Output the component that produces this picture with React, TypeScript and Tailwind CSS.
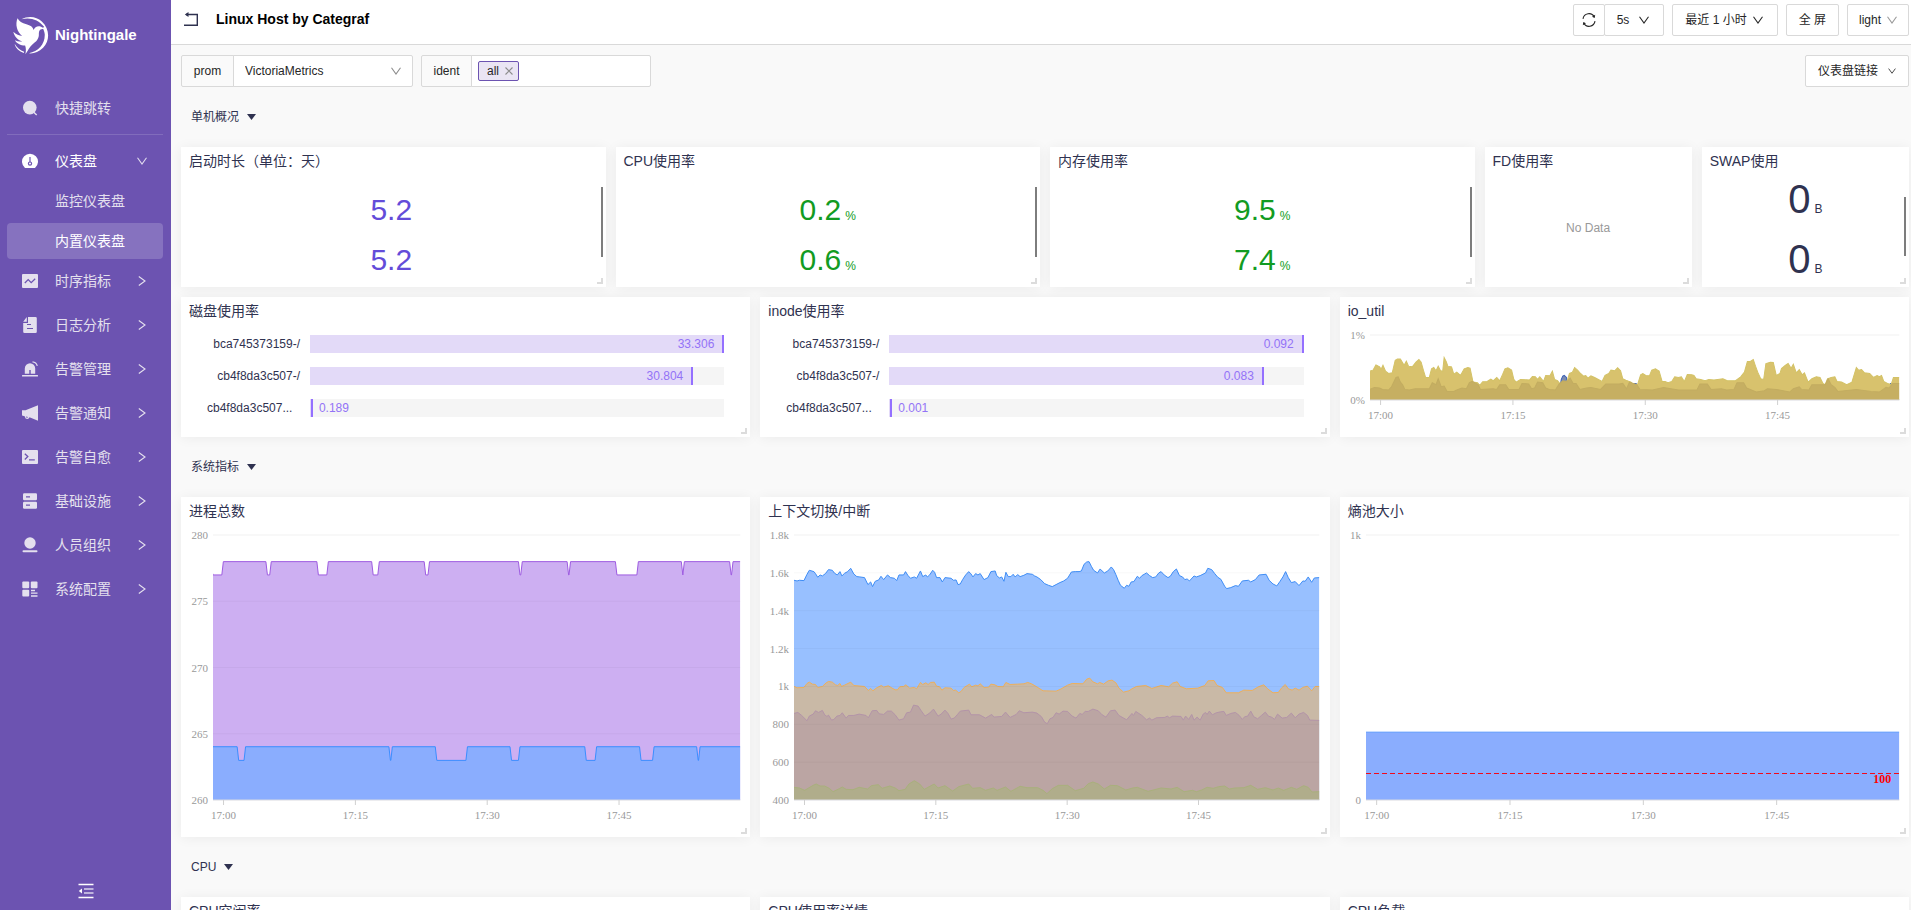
import React, { ReactNode, useState } from "react";
import clsx from "clsx";

type Series = {
  points: string;
  width: number;
  height: number;
  fill: string;
  stroke: string;
}

type Tick = {
  label: string;
  pos: number;
}

const timeTicks: Tick[] = [
  { label: '17:00', pos: 2 },
  { label: '17:15', pos: 27 },
  { label: '17:30', pos: 52 },
  { label: '17:45', pos: 77 },
];

const menus = [
  { name: '时序指标', icon: 'metric' },
  { name: '日志分析', icon: 'log' },
  { name: '告警管理', icon: 'alarm' },
  { name: '告警通知', icon: 'notify' },
  { name: '告警自愈', icon: 'heal' },
  { name: '基础设施', icon: 'infra' },
  { name: '人员组织', icon: 'people' },
  { name: '系统配置', icon: 'system' },
];

// a flat line with short drops to the lower level, as [start, end] on the time axis
const dipsToPoints = (dips: number[][], high: number, low: number) => {
  const points = dips.flatMap(([start, end]) => [
    `${start},${high}`,
    `${Math.min(start + 4, (start + end) / 2)},${low}`,
    `${Math.max(end - 4, (start + end) / 2)},${low}`,
    `${end},${high}`,
  ]);
  return `0,${dips[0][0] < 0 ? low : high} ${points.join(' ')} 1376,${high}`;
}

const processSeries: Series[] = [
  {
    points: dipsToPoints([[-10, 27], [138, 152], [271, 301], [414, 434], [551, 565], [797, 807], [924, 933], [1050, 1110], [1222, 1230], [1348, 1357]], 80, 120),
    width: 1376, height: 796, fill: '#cdaff2', stroke: '#9d5be0',
  },
  {
    points: dipsToPoints([[63, 85], [459, 468], [580, 664], [775, 801], [970, 1001], [1113, 1151], [1262, 1271]], 636, 677),
    width: 1376, height: 796, fill: '#8aadfe', stroke: '#3a8eff',
  },
];

const shift = (points: string, dx: number, dy: number) =>
  points.split(' ').map((p) => {
    const [x, y] = p.split(',').map(Number);
    return `${x - dx},${y - dy}`;
  }).join(' ');

const contextSeries: Series[] = [
  {
    points: shift('116,300 124,302 130,300 142,301 150,282 156,270 168,274 172,280 178,291 184,284 190,287 198,280 206,268 216,270 222,279 229,284 236,274 241,287 248,279 256,274 264,264 272,281 280,289 288,290 300,292 309,313 316,305 321,319 328,303 337,299 343,288 350,298 360,284 368,292 378,294 384,301 390,284 402,284 407,274 413,285 420,294 430,290 436,294 446,272 452,289 460,284 464,290 470,284 478,270 483,276 488,292 497,292 503,305 510,292 526,294 532,300 539,299 544,313 550,311 556,298 564,284 572,274 578,281 583,290 590,280 596,284 602,280 612,298 622,292 630,274 641,272 645,286 652,293 658,290 664,303 669,276 675,289 682,289 688,282 693,290 700,283 706,289 716,285 724,280 738,282 744,287 750,290 760,298 770,310 780,315 790,319 800,313 810,307 820,302 830,294 840,275 850,274 860,274 866,272 873,252 880,245 886,244 892,258 898,270 908,278 915,266 920,272 926,278 935,272 944,260 950,268 956,283 962,300 968,315 978,324 984,315 990,318 996,305 1003,304 1012,288 1018,294 1024,286 1036,278 1044,286 1052,292 1060,290 1068,278 1074,274 1082,284 1092,292 1098,288 1106,274 1114,266 1122,286 1130,290 1136,298 1142,296 1148,302 1160,287 1166,290 1176,286 1190,278 1196,264 1206,268 1214,280 1222,291 1230,297 1240,318 1245,325 1256,322 1268,316 1276,318 1286,302 1302,300 1308,305 1320,298 1330,284 1348,282 1356,300 1366,311 1376,317 1384,304 1392,290 1399,274 1406,292 1414,307 1424,304 1434,316 1444,302 1450,303 1458,290 1467,306 1474,293 1487,292', 116, 164),
    width: 1371, height: 796, fill: '#98c0ff', stroke: '#3f8df5',
  },
  {
    points: shift('116,619 124,623 142,622 150,610 156,606 164,612 172,613 178,622 190,619 200,608 206,604 216,606 224,614 230,616 236,610 240,619 248,615 264,606 272,616 300,619 310,631 316,625 322,632 332,623 344,616 350,621 362,617 372,624 380,629 386,629 392,620 402,619 408,614 418,624 430,622 436,626 446,607 452,613 460,608 466,613 472,607 482,606 488,618 496,620 502,630 510,623 526,624 532,631 538,630 546,638 552,634 560,622 574,612 580,620 590,615 596,617 602,611 612,622 624,621 630,612 640,614 648,619 662,620 669,607 680,613 700,612 716,611 726,607 736,611 748,619 766,632 800,633 812,627 830,615 842,610 870,611 880,597 888,594 896,605 908,611 914,607 924,612 936,602 946,600 956,608 964,624 976,636 990,632 998,626 1010,619 1034,616 1050,625 1074,616 1094,620 1104,609 1116,605 1124,619 1140,626 1170,624 1188,616 1197,602 1212,601 1220,616 1234,622 1244,638 1276,638 1290,630 1312,631 1328,620 1342,614 1352,626 1366,638 1380,637 1388,624 1398,613 1406,626 1416,630 1424,624 1434,630 1444,622 1456,618 1467,632 1476,619 1487,619', 116, 164),
    width: 1371, height: 796, fill: '#c9b9a6', stroke: '#efaf58',
  },
  {
    points: shift('116,700 126,697 136,706 150,722 156,708 166,702 172,692 180,697 190,691 196,704 202,709 206,705 214,720 220,718 228,708 236,706 242,698 252,714 258,706 272,706 286,702 304,706 310,713 320,692 332,691 338,701 350,703 360,693 370,693 380,704 390,720 402,716 410,698 420,696 428,675 440,678 448,692 458,708 470,699 480,687 492,708 500,702 510,690 518,700 526,717 534,714 542,704 550,693 572,690 578,704 600,704 616,714 632,703 638,711 658,709 668,696 680,712 696,703 704,692 716,698 738,696 750,699 762,710 770,726 777,731 784,716 792,712 800,698 808,702 818,693 830,694 842,708 852,714 862,700 868,703 876,694 884,694 896,687 910,692 920,704 930,711 942,692 954,690 964,706 984,719 998,700 1002,706 1008,694 1024,706 1036,719 1044,714 1050,720 1062,713 1084,712 1090,708 1096,713 1104,708 1126,709 1132,720 1138,708 1146,718 1154,703 1160,720 1168,711 1176,720 1184,702 1190,697 1194,703 1200,693 1208,704 1218,698 1230,695 1238,694 1244,706 1256,700 1268,697 1278,706 1286,718 1292,710 1300,708 1308,693 1316,710 1326,716 1336,706 1346,696 1354,708 1364,712 1370,718 1378,702 1390,714 1402,712 1414,699 1424,713 1434,702 1446,697 1456,706 1462,720 1487,721', 116, 164),
    width: 1371, height: 796, fill: '#bba5a3', stroke: '#b394a8',
  },
  {
    points: shift('116,922 130,924 144,931 154,924 166,916 174,912 184,918 196,918 208,925 218,935 234,926 242,921 252,928 270,929 286,922 308,927 318,917 336,914 346,925 366,918 380,924 390,932 406,928 416,912 430,902 444,912 456,928 472,918 482,912 492,924 510,917 530,933 546,920 572,912 582,925 602,923 616,931 636,924 646,931 668,921 682,934 706,919 724,923 752,923 766,931 776,941 790,926 806,916 830,916 850,932 872,925 884,911 896,906 910,912 926,927 942,916 960,917 982,930 1000,924 1012,922 1040,934 1074,924 1100,927 1116,922 1134,935 1156,931 1166,935 1180,930 1194,922 1210,925 1224,920 1240,918 1252,927 1266,924 1290,923 1308,916 1326,928 1346,923 1366,930 1380,924 1394,931 1414,922 1428,928 1446,917 1458,922 1468,936 1487,935', 116, 164),
    width: 1371, height: 796, fill: '#b0ad8b', stroke: '#a9b07c',
  },
];

const ioSeries: Series[] = [
  {
    points: shift('108,330 615,330 624,268 628,258 632,256 638,262 644,330 810,330 814,280 826,280 830,330 1510,330 1512,280 1517,280 1520,330 1536,330', 108, 134),
    width: 1428, height: 196, fill: '#7b8bb0', stroke: '#3c60b4',
  },
  {
    points: shift('108,243 116,240 124,224 134,230 138,237 143,225 150,243 158,250 168,248 176,210 182,206 190,206 200,225 206,213 212,228 222,230 232,216 240,208 246,216 252,240 258,262 268,262 274,236 280,232 286,242 292,228 298,241 304,244 308,202 314,215 318,228 328,230 334,252 342,246 352,256 362,236 372,232 378,234 386,276 398,278 404,286 412,275 424,274 434,267 440,272 450,262 458,272 466,252 472,236 480,233 490,240 496,268 502,276 514,268 530,269 538,270 546,259 554,260 560,268 566,260 576,274 582,256 594,255 600,243 606,268 614,272 620,280 624,290 630,278 640,272 646,250 654,246 660,232 668,240 676,250 684,258 690,256 696,264 704,257 714,262 724,268 734,274 742,256 752,250 758,240 768,242 776,233 784,242 790,266 798,270 812,276 818,284 830,283 838,254 844,250 852,256 862,257 868,240 878,236 888,243 896,274 904,274 912,278 922,274 930,260 940,262 948,260 956,274 964,253 976,254 982,256 988,266 1000,268 1012,272 1022,268 1036,270 1046,268 1060,266 1072,272 1094,272 1108,260 1118,246 1126,214 1134,214 1142,208 1148,228 1154,246 1162,266 1170,268 1176,220 1188,216 1196,217 1204,256 1214,250 1218,235 1228,226 1236,220 1244,234 1250,222 1258,248 1266,238 1274,254 1280,248 1290,276 1300,266 1312,260 1322,262 1330,280 1336,284 1342,266 1352,262 1362,260 1368,274 1380,276 1394,284 1408,276 1414,254 1420,232 1426,240 1434,238 1442,248 1456,250 1466,262 1476,256 1482,260 1488,256 1494,274 1504,280 1514,283 1520,262 1536,262', 108, 134),
    width: 1428, height: 196, fill: '#d8c26d', stroke: '#d3c266',
  },
  {
    points: shift('108,298 120,292 134,294 142,298 158,300 166,290 172,276 178,262 184,260 190,276 196,284 202,298 214,300 230,296 252,296 268,296 276,278 286,284 292,266 300,290 308,288 316,304 334,304 342,300 356,294 368,296 376,278 384,274 400,284 406,298 440,296 450,298 458,284 474,284 482,298 510,298 518,280 536,282 544,296 552,294 560,276 574,278 582,294 592,298 608,300 618,282 628,272 640,274 648,264 656,280 664,280 674,298 692,294 704,292 730,298 744,282 780,282 790,280 800,296 808,276 828,284 836,298 870,300 900,292 940,300 990,300 998,282 1018,282 1028,298 1056,296 1070,300 1090,298 1098,278 1116,278 1124,294 1150,306 1172,302 1180,296 1204,298 1240,306 1250,296 1266,290 1272,298 1292,300 1300,284 1336,284 1344,266 1352,284 1362,292 1370,304 1420,298 1460,304 1482,306 1500,292 1508,294 1518,280 1536,280', 108, 134),
    width: 1428, height: 196, fill: '#c6af62', stroke: '#c2ac60',
  },
];

const entropySeries: Series[] = [
  { points: '0,744 1000,744', width: 1000, height: 1000, fill: '#8aadfe', stroke: '#5c98fb' },
];

const Chevron = ({ className, size = 'w-[10px] h-2' }: { className?: string, size?: string }) => (
  <svg viewBox="0 0 10 8" fill="none" stroke="currentColor" strokeWidth="1.1" className={clsx('shrink-0', size, className)}>
    <path d="M.5.8 5 7 9.5.8" />
  </svg>
)

const MenuIcon = ({ type }: { type: string }) => (
  <svg viewBox="0 0 16 16" fill="currentColor" className="size-4 shrink-0">
    {type == 'search' && (
      <>
        <circle cx="7.8" cy="7.6" r="6.8" />
        <path d="m11.5 12 3.2 3" stroke="currentColor" strokeWidth="1.4" />
      </>
    )}
    {type == 'dashboard' && (
      <>
        <path d="M3 15a8 8 0 1 1 10 0Z" />
        <path d="M8 4v5" stroke="#6c53b1" strokeWidth="1.2" />
        <circle cx="8" cy="10.6" r="1.6" fill="none" stroke="#6c53b1" strokeWidth="1.2" />
      </>
    )}
    {type == 'metric' && (
      <>
        <rect y="1" width="16" height="14" rx="1" />
        <path d="m2.8 10 3.4-3.4 3 3 4-3.8" fill="none" stroke="#6c53b1" strokeWidth="1.3" />
      </>
    )}
    {type == 'log' && (
      <>
        <path d="M6 0h7.500a1.300 1.300 0 0 1 1.300 1.300v13.400a1.300 1.300 0 0 1-1.300 1.300h-11A1.300 1.300 0 0 1 1.200 14.700V6H6Z" />
        <path d="M4.800 0v4.800H1.200Z" />
        <path d="M5 7.500h4M5 11.500h6" stroke="#6c53b1" strokeWidth="1.2" />
      </>
    )}
    {type == 'alarm' && (
      <>
        <path d="M2.800 12.800V7.500a5.200 5.200 0 0 1 10.400 0v5.300H8.700V9H7.300v3.800Z" />
        <rect y="14" width="16" height="1.5" rx=".5" />
        <path d="M10.500.8a5.500 5.500 0 0 1 4.800 4" fill="none" stroke="currentColor" strokeWidth="1.2" />
      </>
    )}
    {type == 'notify' && (
      <path d="M16 .2v15.600L7.500 12.300A2.300 2.300 0 0 1 3 12L2.700 11.200 0 10.600V5.200h3.500ZM4 11.500a1 1 0 0 0 2 .4Z" fillRule="evenodd" />
    )}
    {type == 'heal' && (
      <>
        <rect y="1" width="16" height="14" rx="1" />
        <path d="m2.800 4.800 3 2.800-3 2.800M7 10.800h5.800" fill="none" stroke="#6c53b1" strokeWidth="1.3" />
      </>
    )}
    {type == 'infra' && (
      <>
        <rect x="1" y=".3" width="14" height="6.9" rx="1.2" />
        <rect x="1" y="8.8" width="14" height="6.9" rx="1.2" />
        <path d="M4 3.800h4M4 12.200h4" stroke="#6c53b1" strokeWidth="1.2" />
      </>
    )}
    {type == 'people' && (
      <>
        <circle cx="8" cy="6" r="5.7" />
        <rect x=".5" y="13.3" width="15" height="2" rx="1" />
      </>
    )}
    {type == 'system' && (
      <>
        <rect x=".3" y=".5" width="6.9" height="6.7" rx="1" />
        <rect x="8.8" y=".5" width="6.7" height="6.7" rx="1" />
        <rect x=".3" y="8.8" width="6.9" height="6.7" rx="1" />
        <path d="M9 9.500h4M9 12.200h6.500M9 15h6.500" stroke="currentColor" strokeWidth="1.3" />
      </>
    )}
  </svg>
)

const Logo = () => (
  <a href="#" className="flex items-start gap-1.5 h-[88px] pl-[13px] pt-[17px] text-white">
    <svg viewBox="0 0 110 116" fill="currentColor" className="w-9 h-[38px] shrink-0">
      <path d="M26 7C46-4 72-2 88 14c24 22 26 58 4 80-14 14-30 19-44 17 30-6 50-28 49-58-1-8-3-14-6-19l4-4C78 8 52 0 26 7Z" />
      <path d="M14 4c4 9 14 15 27 18 12 3 20 8 22 18 3-9 12-14 21-11l12 6-12 3c-5 3-5 10-5 18-1 13-9 20-19 27-9 7-13 18-22 31 2-11 2-19-1-27-14 0-26-6-31-16 8 4 15 5 22 3C14 70 4 60 1 45c8 8 18 12 27 13C12 46 6 22 14 4Z" />
      <path d="M5 82c7 12 17 20 29 24l-1 4C19 105 8 96 5 82Z" />
    </svg>
    <span className="pt-1 text-[15px] leading-7 font-bold">Nightingale</span>
  </a>
)

const Sidebar = () => (
  <aside className="flex flex-col shrink-0 w-[171px] bg-[#6c53b1] text-[#e4e0ee] text-sm">
    <Logo />
    <nav className="flex flex-col pl-[7px] pr-2">
      <a href="#" className="flex items-center h-10 pl-[15px] gap-[17px]">
        <MenuIcon type="search" />
        快捷跳转
      </a>
      <hr className="my-1.5 border-white/15" />
      <a href="#" className="flex items-center h-10 pl-[15px] pr-4 gap-[17px] text-white">
        <MenuIcon type="dashboard" />
        <span className="flex-1">仪表盘</span>
        <Chevron className="opacity-80" />
      </a>
      <div className="flex flex-col gap-1 py-0.5">
        <a href="#" className="flex items-center h-9 pl-12">监控仪表盘</a>
        <a href="#" className="flex items-center h-9 pl-12 rounded bg-white/18 text-white">内置仪表盘</a>
      </div>
      <div className="flex flex-col gap-1">
        {menus.map((menu) => (
          <a key={menu.name} href="#" className="flex items-center h-10 pl-[15px] pr-4 gap-[17px]">
            <MenuIcon type={menu.icon} />
            <span className="flex-1">{menu.name}</span>
            <Chevron className="-rotate-90" />
          </a>
        ))}
      </div>
    </nav>
    <button aria-label="收起菜单" className="mt-auto mb-[11px] self-center text-white">
      <svg viewBox="0 0 16 16" fill="none" stroke="currentColor" className="size-4">
        <path d="M.5 1.500h15M.5 14.500h15" strokeWidth="1.3" />
        <path d="M6 6h9.500M6 10h9.500" strokeWidth="1.3" opacity=".75" />
        <path d="M4 5.500v5L.8 8Z" fill="currentColor" stroke="none" />
      </svg>
    </button>
  </aside>
)

const Panel = ({ title, className, children }: { title: string, className: string, children?: ReactNode }) => (
  <section className={clsx('relative flex flex-col min-w-0 bg-white shadow-[0_1px_12px_rgba(0,0,0,0.06)]', className)}>
    <h3 className="h-7 px-2 text-sm leading-7">{title}</h3>
    {children}
    <span className="absolute right-[3px] bottom-[3px] size-1.5 border-r-2 border-b-2 border-[#dcdcdc]" />
  </section>
)

const RowTitle = ({ name }: { name: string }) => (
  <button className="flex items-center gap-2 h-10 px-2.5 self-start text-xs">
    {name}
    <svg viewBox="0 0 9 6" fill="currentColor" className="w-[9px] h-1.5"><path d="M0 0h9L4.500 6Z" /></svg>
  </button>
)

const Stats = ({ values, unit, className }: { values: string[], unit?: string, className: string }) => (
  <div className={clsx('flex-1 flex flex-col justify-center min-h-0', className)}>
    {values.map((value, i) => (
      <div key={i} className="flex items-baseline justify-center gap-1">
        {value}
        <span className="text-xs">{unit}</span>
      </div>
    ))}
  </div>
)

const Scrollbar = ({ className }: { className: string }) => (
  <span className={clsx('absolute right-[3px] w-0.5 bg-[#7d7d7d]', className)} />
)

const BarGauge = ({ rows }: { rows: { label: string, value: string, percent: number }[] }) => (
  <div className="flex flex-col gap-3.5 pt-2.5 px-[26px] text-xs leading-[18px]">
    {rows.map((row) => (
      <div key={row.label} className="flex gap-2.5">
        <span className={clsx('w-[93px] shrink-0', row.label.endsWith('...') ? 'text-left' : 'text-right')}>{row.label}</span>
        <div className="flex flex-1 h-[18px] bg-[#f5f5f5] text-[#9373f7]">
          <div className="border-r-2 border-[#9470ff] bg-[#e3daf8] text-right" style={{ width: `${row.percent}%` }}>
            {row.percent > 10 && <span className="pr-2">{row.value}</span>}
          </div>
          {row.percent <= 10 && <span className="pl-1.5">{row.value}</span>}
        </div>
      </div>
    ))}
  </div>
)

const AreaChart = ({ series, yTicks, threshold, className }: { series: Series[], yTicks: string[], threshold?: { value: string, pos: number }, className: string }) => (
  <div className={clsx('flex-1 flex min-h-0 mt-2.5 mr-2.5 mb-[37px]', className)}>
    <svg className="w-full h-full overflow-visible font-['Liberation_Serif','Noto_Sans_CJK_SC',serif] text-[11px]">
      {series.map((s, i) => (
        <svg key={i} viewBox={`0 0 ${s.width} ${s.height}`} preserveAspectRatio="none" width="100%" height="100%">
          <polygon points={`0,${s.height} ${s.points} ${s.width},${s.height}`} fill={s.fill} />
          <polyline points={s.points} fill="none" stroke={s.stroke} vectorEffect="non-scaling-stroke" />
        </svg>
      ))}
      {yTicks.map((label, i) => {
        const pos = `${i / (yTicks.length - 1) * 100}%`;
        return (
          <g key={label}>
            {i < yTicks.length - 1 && <line x1="0" x2="100%" y1={pos} y2={pos} stroke="#000" strokeOpacity={i == 0 ? 0.06 : 0.03} />}
            <svg y={pos} overflow="visible"><text x="-5" y="4" textAnchor="end" fill="#999">{label}</text></svg>
          </g>
        )
      })}
      <line x1="0" x2="100%" y1="100%" y2="100%" stroke="#d9d9e0" />
      {timeTicks.map((tick) => (
        <svg key={tick.label} x={`${tick.pos}%`} y="100%" overflow="visible">
          <line y1="0" y2="5" stroke="#d0d0d0" />
          <text y="19" textAnchor="middle" fill="#999">{tick.label}</text>
        </svg>
      ))}
      {threshold && (
        <>
          <line x1="0" x2="100%" y1={`${threshold.pos}%`} y2={`${threshold.pos}%`} stroke="#f00a1a" strokeDasharray="5 3" />
          <svg x="100%" y={`${threshold.pos}%`} overflow="visible">
            <text x="-8" y="9" textAnchor="end" fill="#ff0000" fontSize="12" fontWeight="bold">{threshold.value}</text>
          </svg>
        </>
      )}
    </svg>
  </div>
)

const buttonStyle = 'flex items-center h-8 border border-[#d9d9d9] rounded-[2px] bg-white text-[#262626] text-xs';

export default function App() {
  const [ident, setIdent] = useState('');

  return (
    <div className="flex h-screen overflow-hidden bg-[#f9f9f9] text-[#2f3250] font-['Liberation_Sans','Noto_Sans_CJK_SC',sans-serif]">
      <Sidebar />
      <div className="flex-1 flex flex-col min-w-0">
        <header className="flex items-center justify-between h-[45px] shrink-0 pl-[13px] pr-0.5 pb-1 bg-white border-b border-[#d9d9d9]">
          <div className="flex items-center pb-0.5">
            <button aria-label="返回">
              <svg viewBox="0 0 15 15" fill="none" stroke="currentColor" strokeWidth="1.4" className="size-[15px]">
                <path d="M2 2.500h11.300v10.800H0" />
                <path d="M4.500 0v5L.8 2.500Z" fill="currentColor" stroke="none" />
              </svg>
            </button>
            <h1 className="pl-[17px] text-sm font-bold text-black">Linux Host by Categraf</h1>
          </div>
          <div className="flex gap-2">
            <div className="flex">
              <button aria-label="刷新" className={clsx(buttonStyle, 'px-2')}>
                <svg viewBox="0 0 14 14" fill="none" stroke="currentColor" strokeWidth="1.1" className="size-[14px]">
                  <path d="M1 5.800A6 6 0 0 1 12.300 4M13 8.200A6 6 0 0 1 1.700 10" />
                  <path d="m13.200 1.800-.5 3.200-2.700-1.200ZM.8 12.200 1.300 9 4 10.200Z" fill="currentColor" stroke="none" />
                </svg>
              </button>
              <button className={clsx(buttonStyle, '-ml-px gap-2.5 pl-3 pr-3.5')}>5s <Chevron /></button>
            </div>
            <button className={clsx(buttonStyle, 'gap-1.5 pl-3 pr-3.5')}>最近 1 小时 <Chevron /></button>
            <button className={clsx(buttonStyle, 'px-3')}>全 屏</button>
            <label className={clsx(buttonStyle, 'relative')}>
              <select aria-label="主题" className="h-full w-[60px] pl-[11px] appearance-none outline-none">
                <option>light</option>
              </select>
              <Chevron className="absolute right-[11px] text-[#999] pointer-events-none" />
            </label>
          </div>
        </header>
        <main className="flex flex-col gap-2.5 pt-2.5 pl-2.5 pr-0.5">
          <div className="flex items-center gap-2">
            <div className="flex text-xs text-[#262626]">
              <label htmlFor="prom" className="h-8 w-[53px] text-center leading-[30px] border border-[#d9d9d9] rounded-l-[2px] bg-[#fafafa]">prom</label>
              <div className="relative flex items-center h-8 -ml-px border border-[#d9d9d9] rounded-r-[2px] bg-white">
                <select id="prom" className="h-full w-[178px] pl-[11px] appearance-none outline-none">
                  <option>VictoriaMetrics</option>
                </select>
                <Chevron className="absolute right-[11px] text-[#8c8c8c] pointer-events-none" />
              </div>
            </div>
            <div className="flex text-xs text-[#262626]">
              <label htmlFor="ident" className="h-8 w-[51px] text-center leading-[30px] border border-[#d9d9d9] rounded-l-[2px] bg-[#fafafa]">ident</label>
              <div className="flex items-center h-8 w-[180px] -ml-px px-1.5 border border-[#d9d9d9] rounded-r-[2px] bg-white">
                <span className="flex items-center gap-1.5 h-5 pl-2 pr-[5px] border border-[#6c53b1] rounded-[2px] bg-[#eae5f4]">
                  all
                  <button aria-label="移除 all" className="text-[#8c8c8c]">
                    <svg viewBox="0 0 8 8" stroke="currentColor" strokeWidth="1.1" className="size-2"><path d="m.5.5 7 7M7.500.5l-7 7" /></svg>
                  </button>
                </span>
                <input id="ident" value={ident} onChange={(e) => setIdent(e.target.value)} className="flex-1 min-w-0 pl-1 outline-none" />
              </div>
            </div>
            <button className={clsx(buttonStyle, 'ml-auto px-3 gap-2.5')}>仪表盘链接 <Chevron size="w-2 h-1.5" /></button>
          </div>

          <RowTitle name="单机概况" />
          <div className="grid grid-cols-24 gap-2.5">
            <Panel title="启动时长（单位：天）" className="col-span-6 h-[140px]">
              <Stats values={['5.2', '5.2']} className="pt-2 text-[30px] leading-[50px] text-[#634cd9]" />
              <Scrollbar className="top-10 h-[70px]" />
            </Panel>
            <Panel title="CPU使用率" className="col-span-6 h-[140px]">
              <Stats values={['0.2', '0.6']} unit="%" className="pt-2 text-[30px] leading-[50px] text-[#129b22]" />
              <Scrollbar className="top-10 h-[70px]" />
            </Panel>
            <Panel title="内存使用率" className="col-span-6 h-[140px]">
              <Stats values={['9.5', '7.4']} unit="%" className="pt-2 text-[30px] leading-[50px] text-[#129b22]" />
              <Scrollbar className="top-10 h-[70px]" />
            </Panel>
            <Panel title="FD使用率" className="col-span-3 h-[140px]">
              <div className="flex-1 flex items-center justify-center pb-1.5 text-xs text-[#999]">No Data</div>
            </Panel>
            <Panel title="SWAP使用" className="col-span-3 h-[140px]">
              <Stats values={['0', '0']} unit="B" className="pb-1 text-[40px] leading-[60px]" />
              <Scrollbar className="top-[50px] h-[59px]" />
            </Panel>
            <Panel title="磁盘使用率" className="col-span-8 h-[140px]">
              <BarGauge rows={[
                { label: 'bca745373159-/', value: '33.306', percent: 100 },
                { label: 'cb4f8da3c507-/', value: '30.804', percent: 92.5 },
                { label: 'cb4f8da3c507...', value: '0.189', percent: 0.7 },
              ]} />
            </Panel>
            <Panel title="inode使用率" className="col-span-8 h-[140px]">
              <BarGauge rows={[
                { label: 'bca745373159-/', value: '0.092', percent: 100 },
                { label: 'cb4f8da3c507-/', value: '0.083', percent: 90.4 },
                { label: 'cb4f8da3c507...', value: '0.001', percent: 0.7 },
              ]} />
            </Panel>
            <Panel title="io_util" className="col-span-8 h-[140px]">
              <AreaChart series={ioSeries} yTicks={['1%', '0%']} className="ml-[30px]" />
            </Panel>
          </div>

          <RowTitle name="系统指标" />
          <div className="grid grid-cols-3 gap-2.5">
            <Panel title="进程总数" className="h-[340px]">
              <AreaChart series={processSeries} yTicks={['280', '275', '270', '265', '260']} className="ml-8" />
            </Panel>
            <Panel title="上下文切换/中断" className="h-[340px]">
              <AreaChart series={contextSeries} yTicks={['1.8k', '1.6k', '1.4k', '1.2k', '1k', '800', '600', '400']} className="ml-[34px]" />
            </Panel>
            <Panel title="熵池大小" className="h-[340px]">
              <AreaChart series={entropySeries} yTicks={['1k', '0']} threshold={{ value: '100', pos: 90 }} className="ml-[26px]" />
            </Panel>
          </div>

          <RowTitle name="CPU" />
          <div className="grid grid-cols-3 gap-2.5">
            <Panel title="CPU空闲率" className="h-[340px]" />
            <Panel title="CPU使用率详情" className="h-[340px]" />
            <Panel title="CPU负载" className="h-[340px]" />
          </div>
        </main>
      </div>
    </div>
  )
}
